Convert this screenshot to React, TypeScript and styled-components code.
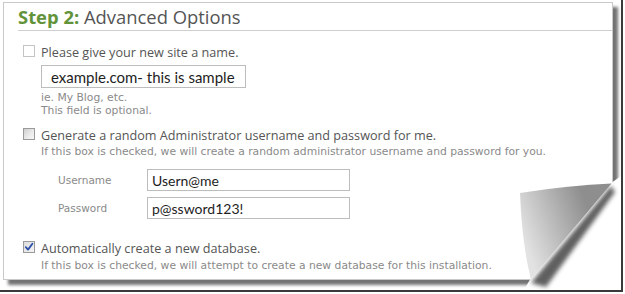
import React from "react";
import styled, { createGlobalStyle } from "styled-components";

const GlobalStyle = createGlobalStyle`
  html, body { margin: 0; padding: 0; background: #ffffff; }
  * { box-sizing: border-box; }
`;

const Frame = styled.div`
  position: relative;
  width: 623px;
  height: 292px;
  border-right: 2px solid #3a3a3a;
  border-bottom: 2px solid #3a3a3a;
  background: #ffffff;
  padding: 2px 0 0 3px;
`;

const Paper = styled.div`
  width: 610px;
  height: 278px;
  border: 1px solid #c9c9c9;
  background: #ffffff;
  box-shadow: 5px 5px 3px rgba(0, 0, 0, 0.55);
  padding-top: 3px;
`;

const Heading = styled.h2`
  margin: 0 0 0 14px;
  padding: 0 0 2px 0;
  font-family: "Open Sans", sans-serif;
  font-size: 18.4px;
  line-height: 22px;
  font-weight: 400;
  color: #555555;
  border-bottom: 1px solid #cfcfcf;
`;

const StepLabel = styled.span`
  color: #62933a;
  font-weight: 700;
`;

const OptionRow = styled.div<{ $top: number }>`
  display: flex;
  align-items: flex-start;
  gap: 6px;
  margin-top: ${(p) => p.$top}px;
  padding-left: 19px;
`;

const Box = styled.span<{ $variant: "light" | "plain" | "checked" }>`
  flex: none;
  width: 12px;
  height: 12px;
  margin-top: 1px;
  border: 1px solid ${(p) => (p.$variant === "light" ? "#c4c4c4" : "#9a9a9a")};
  background: ${(p) =>
    p.$variant === "plain"
      ? "linear-gradient(135deg, #cfcfcf 0%, #ececec 60%, #f6f6f6 100%)"
      : p.$variant === "checked"
      ? "linear-gradient(135deg, #dcdcdc 0%, #f4f4f4 100%)"
      : "#ffffff"};
  display: flex;
  align-items: center;
  justify-content: center;
`;

const OptionBody = styled.div`
  display: flex;
  flex-direction: column;
`;

const OptionLabel = styled.div`
  font-family: "Open Sans", sans-serif;
  font-size: 12.65px;
  line-height: 16px;
  color: #555555;
`;

const Help = styled.div<{ $top?: number }>`
  font-family: "DejaVu Sans", Verdana, sans-serif;
  font-size: 10.75px;
  line-height: 13px;
  color: #8a8a8a;
  margin-top: ${(p) => p.$top ?? 0}px;
`;

const Field = styled.input<{ $w: number; $h: number; $size: number }>`
  display: block;
  width: ${(p) => p.$w}px;
  height: ${(p) => p.$h}px;
  border: 1px solid #bdbdbd;
  padding: 0 0 0 ${(p) => (p.$size > 14 ? 9 : 4)}px;
  margin: 0;
  font-family: Lato, "Open Sans", sans-serif;
  font-size: ${(p) => p.$size}px;
  color: #1e1e1e;
  background: #ffffff;
  outline: none;
`;

const NameField = styled.div`
  margin: 5px 0 3px 37px;
`;

const Credentials = styled.div`
  display: flex;
  flex-direction: column;
  gap: 6px;
  margin-top: 11px;
  padding-left: 54px;
`;

const CredRow = styled.div`
  display: flex;
  align-items: center;
`;

const CredLabel = styled.label`
  width: 89px;
  font-family: "DejaVu Sans", Verdana, sans-serif;
  font-size: 10.5px;
  line-height: 13px;
  color: #8a8a8a;
`;

const Hints = styled.div`
  margin-left: 37px;
`;

const Curl = styled.svg`
  position: absolute;
  left: 500px;
  top: 170px;
  width: 121px;
  height: 120px;
`;

const Check = () => (
  <svg width="10" height="10" viewBox="0 0 10 10">
    <path d="M1.8 5.2 L4 7.6 L8.4 1.8" fill="none" stroke="#2b4fa8" strokeWidth="1.8" strokeLinecap="round" strokeLinejoin="round" />
  </svg>
);

export default function App() {
  return (
    <>
      <GlobalStyle />
      <Frame>
        <Paper>
          <Heading>
            <StepLabel>Step 2:</StepLabel> Advanced Options
          </Heading>

          <OptionRow $top={13}>
            <Box $variant="light" />
            <OptionBody>
              <OptionLabel>Please give your new site a name.</OptionLabel>
            </OptionBody>
          </OptionRow>
          <NameField>
            <Field $w={205} $h={23} $size={15} readOnly value="example.com- this is sample" />
          </NameField>
          <Hints>
            <Help>ie. My Blog, etc.</Help>
            <Help>This field is optional.</Help>
          </Hints>

          <OptionRow $top={10}>
            <Box $variant="plain" />
            <OptionBody>
              <OptionLabel>Generate a random Administrator username and password for me.</OptionLabel>
              <Help $top={2}>If this box is checked, we will create a random administrator username and password for you.</Help>
            </OptionBody>
          </OptionRow>

          <Credentials>
            <CredRow>
              <CredLabel>Username</CredLabel>
              <Field $w={203} $h={22} $size={14} readOnly value="Usern@me" />
            </CredRow>
            <CredRow>
              <CredLabel>Password</CredLabel>
              <Field $w={203} $h={22} $size={14} readOnly value="p@ssword123!" />
            </CredRow>
          </Credentials>

          <OptionRow $top={21}>
            <Box $variant="checked">
              <Check />
            </Box>
            <OptionBody>
              <OptionLabel>Automatically create a new database.</OptionLabel>
              <Help $top={3}>If this box is checked, we will attempt to create a new database for this installation.</Help>
            </OptionBody>
          </OptionRow>
        </Paper>

        <Curl viewBox="500 170 121 120">
          <defs>
            <linearGradient id="curlFill" gradientUnits="userSpaceOnUse" x1="518" y1="225" x2="585" y2="200">
              <stop offset="0" stopColor="#e2e2e2" />
              <stop offset="0.55" stopColor="#b4b4b4" />
              <stop offset="1" stopColor="#8e8e8e" />
            </linearGradient>
            <filter id="blur" x="-50%" y="-50%" width="200%" height="200%">
              <feGaussianBlur stdDeviation="2.2" />
            </filter>
          </defs>
          <polygon points="612.6,182 621,176 621,290 524,290 530,279.6" fill="#ffffff" />
          <polygon points="611,186 615,192 546,287 531,283" fill="#2a2a2a" opacity="0.75" filter="url(#blur)" />
          <path d="M520,193 Q570,185 611.5,183.5 L531,279 Q522,245 520,193 Z" fill="url(#curlFill)" />
        </Curl>
      </Frame>
    </>
  );
}
